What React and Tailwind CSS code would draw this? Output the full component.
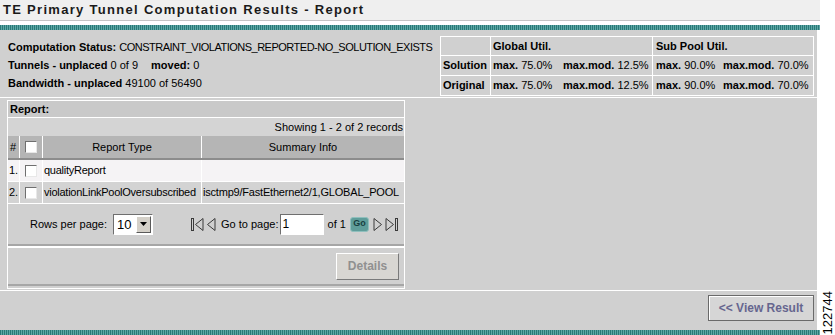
import React from 'react';

const Teal = () => (
    <div className="h-[5px] bg-[repeating-linear-gradient(90deg,#2a7977_0px,#2a7977_1px,#5ca8a5_1px,#5ca8a5_2px)]" />
);

const Check = () => (
    <div className="w-[12px] h-[12px] bg-white border border-t-[#6f6f6f] border-l-[#6f6f6f] border-b-[#e8e8e8] border-r-[#e8e8e8]" />
);

const FirstIcon = () => (
    <svg width="14" height="15" viewBox="0 0 14 15" fill="none" stroke="#3a3a3a" strokeWidth="1">
        <rect x="1.5" y="1.5" width="2" height="12" />
        <path d="M13 1.5 L5.5 7.5 L13 13.5 Z" />
    </svg>
);

const PrevIcon = () => (
    <svg width="10" height="15" viewBox="0 0 10 15" fill="none" stroke="#3a3a3a" strokeWidth="1">
        <path d="M9 1.5 L1.5 7.5 L9 13.5 Z" />
    </svg>
);

const NextIcon = () => (
    <svg width="10" height="15" viewBox="0 0 10 15" fill="none" stroke="#3a3a3a" strokeWidth="1">
        <path d="M1 1.5 L8.5 7.5 L1 13.5 Z" />
    </svg>
);

const LastIcon = () => (
    <svg width="14" height="15" viewBox="0 0 14 15" fill="none" stroke="#3a3a3a" strokeWidth="1">
        <path d="M1 1.5 L8.5 7.5 L1 13.5 Z" />
        <rect x="10.5" y="1.5" width="2" height="12" />
    </svg>
);

const rows = [
    { n: '1.', type: 'qualityReport', info: '', bg: 'bg-[#f5f3f5]' },
    { n: '2.', type: 'violationLinkPoolOversubscribed', info: 'isctmp9/FastEthernet2/1,GLOBAL_POOL', bg: 'bg-[#d3d3d3]' },
];

export default function App() {
    return (
        <div className="w-[835px] h-[335px] flex bg-white overflow-hidden text-[11px] text-black font-['Liberation_Sans',Arial,sans-serif]">
            <div className="w-[820px] flex flex-col">
                {/* Title */}
                <div className="h-[25px]">
                    <div className="h-[21px] bg-[#efefef] border-b border-[#c4c4c4] pl-[3px] flex items-center font-bold text-[13px] tracking-[1.3px] text-[#1a1a1a]">
                        TE Primary Tunnel Computation Results - Report
                    </div>
                </div>
                <Teal />

                <div className="flex-1 flex">
                    <div className="w-[817px] bg-[#d0d0d0] flex flex-col">
                        {/* Summary */}
                        <div className="h-[68px] flex border-b border-white">
                            <div className="w-[432px] pl-[8px] pt-[8px] leading-[18px] whitespace-nowrap">
                                <div><b>Computation Status:</b> <span className="tracking-[-0.5px]">CONSTRAINT_VIOLATIONS_REPORTED-NO_SOLUTION_EXISTS</span></div>
                                <div><b>Tunnels - unplaced</b> 0 of 9 <span className="ml-[10px]"><b>moved:</b> 0</span></div>
                                <div><b>Bandwidth - unplaced</b> 49100 of 56490</div>
                            </div>
                            <table className="ml-[8px] mt-[6px] h-[59px] w-[374px] border-collapse border border-white">
                                <tbody>
                                    <tr className="h-[19px]">
                                        <td className="w-[50px] border border-white"></td>
                                        <td className="w-[162px] border border-white px-[2px] font-bold">Global Util.</td>
                                        <td className="border border-white px-[3px] font-bold">Sub Pool Util.</td>
                                    </tr>
                                    {['Solution', 'Original'].map((r) => (
                                        <tr key={r} className="h-[20px]">
                                            <td className="border border-white px-[2px] font-bold">{r}</td>
                                            <td className="border border-white px-[2px]">
                                                <div className="flex">
                                                    <span className="w-[70px]"><b>max.</b> 75.0%</span>
                                                    <span><b>max.mod.</b> 12.5%</span>
                                                </div>
                                            </td>
                                            <td className="border border-white px-[3px]">
                                                <div className="flex">
                                                    <span className="w-[67px]"><b>max.</b> 90.0%</span>
                                                    <span><b>max.mod.</b> 70.0%</span>
                                                </div>
                                            </td>
                                        </tr>
                                    ))}
                                </tbody>
                            </table>
                        </div>

                        {/* Report panel */}
                        <div className="ml-[7px] mt-[2px] w-[398px] border border-white flex flex-col">
                            <div className="h-[17px] bg-[#c9c9c9] border-b border-white font-bold pl-[2px] flex items-center">Report:</div>
                            <div className="h-[18px] bg-[#d4d4d4] flex items-center justify-end pr-[1px]">Showing 1 - 2 of 2 records</div>
                            <div className="h-[24px] bg-[#b5b5b5] border-b-2 border-[#8c8c8c] grid grid-cols-[12px_23px_159px_1fr]">
                                <div className="border-r border-white flex items-center pl-[2px]">#</div>
                                <div className="border-r border-white flex items-center justify-center"><Check /></div>
                                <div className="border-r border-white flex items-center justify-center">Report Type</div>
                                <div className="flex items-center justify-center">Summary Info</div>
                            </div>
                            {rows.map((r) => (
                                <div key={r.n} className={`h-[22px] ${r.bg} border-b border-white grid grid-cols-[12px_23px_159px_1fr]`}>
                                    <div className="border-r border-white flex items-center pl-[1px]">{r.n}</div>
                                    <div className="border-r border-white flex items-center justify-center"><Check /></div>
                                    <div className="border-r border-white flex items-center pl-[1px] whitespace-nowrap overflow-hidden tracking-[-0.25px]">{r.type}</div>
                                    <div className="flex items-center pl-[1px] whitespace-nowrap overflow-hidden tracking-[-0.2px]">{r.info}</div>
                                </div>
                            ))}

                            {/* Pagination */}
                            <div className="h-[40px] flex items-center pl-[22px] pr-[3px]">
                                <span>Rows per page:</span>
                                <div className="ml-[6px] h-[21px] w-[40px] bg-white border border-t-[#6f6f6f] border-l-[#6f6f6f] border-b-white border-r-white flex items-center">
                                    <span className="flex-1 pl-[3px] text-[13px] leading-none">10</span>
                                    <div className="w-[15px] h-[17px] mr-[1px] bg-[#d4d0c8] border border-t-white border-l-white border-b-[#5a5a5a] border-r-[#5a5a5a] flex items-center justify-center">
                                        <svg width="7" height="4" viewBox="0 0 7 4"><path d="M0 0 H7 L3.5 4 Z" fill="#000" /></svg>
                                    </div>
                                </div>
                                <div className="ml-[37px] flex items-center gap-[2px]">
                                    <FirstIcon />
                                    <PrevIcon />
                                </div>
                                <span className="ml-[5px]">Go to page:</span>
                                <div className="ml-[1px] h-[21px] w-[44px] bg-white border border-t-[#6f6f6f] border-l-[#6f6f6f] border-b-white border-r-white flex items-center pl-[2px] text-[12px]">1</div>
                                <span className="ml-[4px]">of 1</span>
                                <div className="ml-[4px] h-[15px] w-[19px] rounded-[3px] bg-[#5f9d9a] border border-[#8fbfbd] flex items-center justify-center text-[9px] font-bold text-[#183f40]">Go</div>
                                <div className="ml-[4px] flex items-center gap-[2px]">
                                    <NextIcon />
                                    <LastIcon />
                                </div>
                            </div>
                            <div className="h-[2px] bg-[#a6a6a6]" />
                            <div className="h-[2px] bg-white" />

                            {/* Details */}
                            <div className="h-[36px] flex items-center justify-end pr-[5px]">
                                <div className="h-[27px] w-[63px] bg-[#d8d6d2] border border-t-white border-l-white border-b-[#7a7a7a] border-r-[#7a7a7a] flex items-center justify-center font-bold text-[12px] text-[#909090]">
                                    Details
                                </div>
                            </div>
                            <div className="h-[2px] bg-[#a6a6a6]" />
                            <div className="h-[2px] bg-[#d0d0d0]" />
                        </div>

                        {/* Bottom */}
                        <div className="mt-[1px] flex-1 border-t border-white flex items-start justify-end pr-[3px] pt-[4px]">
                            <div className="h-[26px] w-[106px] bg-[#d6d6d6] border border-[#6a6a6a] shadow-[inset_1px_1px_0_#ffffff] flex items-center justify-center font-bold text-[12px] text-[#66668f]">
                                &lt;&lt; View Result
                            </div>
                        </div>
                    </div>
                </div>
                <Teal />
            </div>
            <div className="flex-1 flex items-end justify-center">
                <span className="[writing-mode:vertical-rl] rotate-180 text-[13px] leading-none mb-[1px] font-['Liberation_Sans',Arial,sans-serif]">122744</span>
            </div>
        </div>
    );
}
